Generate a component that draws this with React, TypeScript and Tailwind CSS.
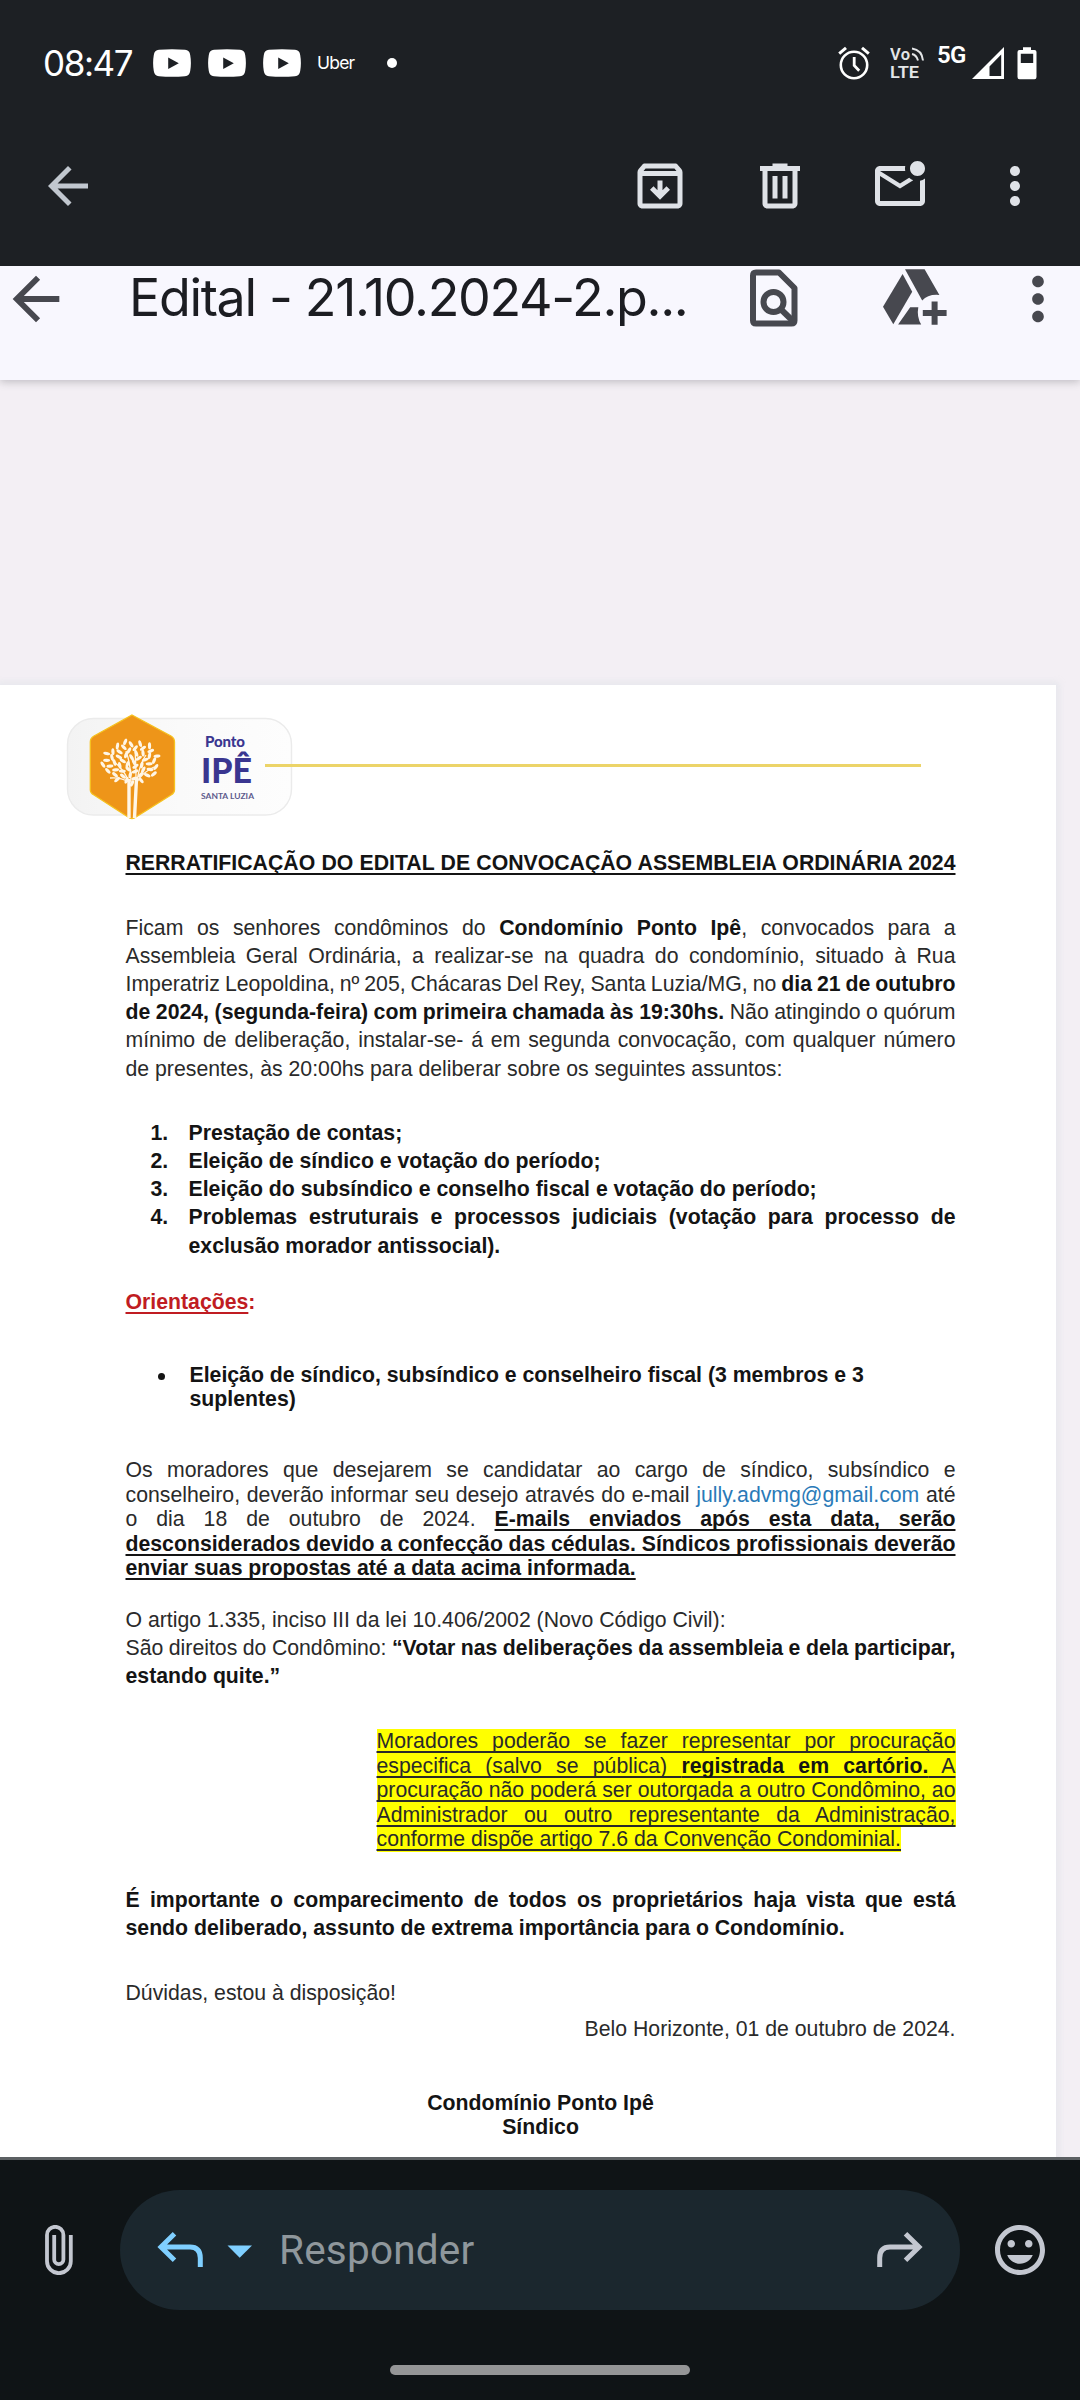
import type { ReactNode } from "react";

function YouTubeBadge() {
  return (
    <svg width="38" height="28" viewBox="0 0 38 28" className="shrink-0">
      <path
        fill="#fff"
        fillRule="evenodd"
        d="M6 .8Q19-.4 32 .8 36.600 1.200 37.200 6Q38.600 14 37.200 22 36.600 26.800 32 27.200 19 28.400 6 27.200 1.400 26.800.8 22-.6 14 .8 6 1.400 1.200 6 .8ZM15.200 8.600V20L25.800 14.300Z"
      />
    </svg>
  );
}

function Icon({ d, size = 60, className = "" }: { d: string; size?: number; className?: string }) {
  return (
    <svg width={size} height={size} viewBox="0 0 24 24" fill="currentColor" fillRule="evenodd" className={"shrink-0 " + className}>
      <path d={d} />
    </svg>
  );
}

const ARROW_BACK = "M20 11H7.830l5.590-5.590L12 4l-8 8 8 8 1.410-1.410L7.830 13H20v-2z";
const ARCHIVE =
  "M20.540 5.230l-1.390-1.680C18.880 3.210 18.470 3 18 3H6c-.47 0-.88.21-1.160.55L3.460 5.230C3.170 5.570 3 6.020 3 6.500V19c0 1.100.9 2 2 2h14c1.100 0 2-.9 2-2V6.500c0-.48-.17-.93-.46-1.270zM6.240 5h11.520l.83 1H5.420l.82-1zM5 19V8h14v11H5zM11 9.800v3.900l-1.600-1.600L8 13.500l4 4 4-4-1.400-1.400-1.600 1.600V9.800z";
const TRASH =
  "M9 3h6v1h5v2h-1v13c0 1.100-.9 2-2 2H7c-1.100 0-2-.9-2-2V6H4V4h5zM7 6v13h10V6zM9 8h2v9H9zM13 8h2v9h-2z";
const MAIL_UNREAD =
  "M22 8.980V18c0 1.100-.9 2-2 2H4c-1.100 0-2-.9-2-2V6c0-1.100.9-2 2-2h10.100c-.06.32-.1.66-.1 1s.04.68.1 1H4l8 5 3.670-2.290c.47.43 1.020.76 1.630.98L12 13 4 8v10h16V9.900c.74-.15 1.420-.48 2-.92zM16 5c0 1.660 1.340 3 3 3s3-1.340 3-3-1.340-3-3-3-3 1.340-3 3z";
const MORE =
  "M12 8c1.100 0 2-.9 2-2s-.9-2-2-2-2 .9-2 2 .9 2 2 2zm0 2c-1.100 0-2 .9-2 2s.9 2 2 2 2-.9 2-2-.9-2-2-2zm0 6c-1.100 0-2 .9-2 2s.9 2 2 2 2-.9 2-2-.9-2-2-2z";
const SMILE =
  "M12 2C6.480 2 2 6.480 2 12s4.480 10 10 10 10-4.480 10-10S17.520 2 12 2zm0 18c-4.420 0-8-3.580-8-8s3.580-8 8-8 8 3.580 8 8-3.580 8-8 8zM15.500 11c.83 0 1.500-.67 1.500-1.500S16.330 8 15.500 8 14 8.670 14 9.500s.67 1.500 1.500 1.500zM8.500 11c.83 0 1.500-.67 1.500-1.500S9.330 8 8.500 8 7 8.670 7 9.500 7.670 11 8.500 11zM12 17.500c2.330 0 4.310-1.460 5.110-3.500H6.890c.8 2.040 2.780 3.500 5.110 3.500z";

function StatusBar() {
  return (
    <div className="flex h-[126px] shrink-0 items-center pl-[43px] pr-[43px] text-white">
      <span className="w-[110px] text-[35px] tracking-[-1.4px] font-['Inter',sans-serif]">08:47</span>
      <div className="flex gap-[17px]">
        <YouTubeBadge />
        <YouTubeBadge />
        <YouTubeBadge />
      </div>
      <span className="ml-[16px] mt-[1px] w-[70px] text-[17.500px] tracking-[-0.8px] font-['Inter',sans-serif]">Uber</span>
      <span className="size-[10px] rounded-full bg-white" />
      <div className="ml-auto flex items-center">
        <svg width="32" height="34" viewBox="0 0 32 34" fill="none" stroke="#fff" className="mr-[20px]">
          <circle cx="16" cy="19" r="13.200" strokeWidth="2.600" />
          <path d="M16.200 11v8.500l5 5.200" strokeWidth="2.800" />
          <path d="M1.200 7.600L8 1.800M30.800 7.600L24 1.800" strokeWidth="3" />
        </svg>
        <svg width="34" height="46" viewBox="0 -6 34 46" fill="none" stroke="#e4e6e8" className="mr-[13px]">
          <text x="0" y="14" fill="#e4e6e8" stroke="none" fontFamily="Roboto, sans-serif" fontWeight="600" fontSize="16.500" textLength="20">Vo</text>
          <text x="0" y="32" fill="#e4e6e8" stroke="none" fontFamily="Roboto, sans-serif" fontWeight="600" fontSize="17" textLength="29" lengthAdjust="spacingAndGlyphs">LTE</text>
          <path d="M22 2.500Q32 4 33 14.500M22 8Q26.500 9 28 14.500" strokeWidth="2" />
        </svg>
        <span className="-mt-[17px] mr-[6px] w-[29px] text-[24px] font-semibold leading-[28px] tracking-[-0.6px] font-['Roboto',sans-serif]">5G</span>
        <svg width="33" height="34" viewBox="0 0 33 34" className="mr-[12px]">
          <path fill="#fff" fillRule="evenodd" d="M32 1V33H0ZM29.200 8.500V30H17.500V20.500Z" />
        </svg>
        <svg width="20" height="34" viewBox="0 0 20 34">
          <path
            fill="#fff"
            fillRule="evenodd"
            d="M6 1.200H14V4H17.500Q19.500 4 19.500 6V31Q19.500 33.200 17.500 33.200H2.500Q.5 33.200.5 31V6Q.5 4 2.500 4H6ZM3.800 7.700V17H16.200V7.700Z"
          />
        </svg>
      </div>
    </div>
  );
}

function MailToolbar() {
  return (
    <div className="flex h-[140px] shrink-0 items-center pb-[20px] pl-[38px] pr-[35px] text-[#dfe2e7]">
      <Icon d={ARROW_BACK} className="text-[#c1c7cf]" />
      <div className="ml-auto flex items-center gap-[60px]">
        <Icon d={ARCHIVE} />
        <Icon d={TRASH} />
        <Icon d={MAIL_UNREAD} />
        <Icon d={MORE} className="-ml-[5px]" />
      </div>
    </div>
  );
}

function PdfToolbar() {
  return (
    <div className="relative z-10 h-[114px] shrink-0 bg-[#f8f7fe] shadow-[0_2px_8px_rgba(60,60,70,0.28)]">
      <div className="flex h-[65px] items-center text-[#47484f]">
        <Icon d={ARROW_BACK} size={70} className="ml-[1px]" />
        <span className="-mt-[2px] ml-[58px] w-[610px] whitespace-nowrap text-[52px] leading-[60px] tracking-[-1.350px] text-[#1c1d22] font-['Inter',sans-serif]">
          Edital - 21.10.2024-2.p...
        </span>
        <svg width="70" height="70" viewBox="0 0 70 70" fill="none" stroke="currentColor" className="shrink-0">
          <path d="M17 8.500H40L55.500 24V56.500Q55.500 59.500 52.500 59.500H17Q14 59.500 14 56.500V11.500Q14 8.500 17 8.500Z" strokeWidth="6" strokeLinejoin="round" />
          <circle cx="34.500" cy="38" r="10" strokeWidth="6" />
          <path d="M41 44.500L55 58" strokeWidth="6" />
        </svg>
        <svg width="70" height="65" viewBox="0 0 70 65" fill="currentColor" className="ml-[71px] shrink-0">
          <path d="M22.600 8L32.200 25.700 13.300 58.300 3 40.700Z" />
          <path d="M25 3.300H44.600L59.400 29Q48 28 42.200 34.500Z" />
          <path d="M30.200 41.300H38.300Q36.500 51 41.200 58.500H18.100Z" />
          <path d="M51.600 35.500h6V44h9v6h-9v8.800h-6V50h-8.800v-6h8.800Z" />
        </svg>
        <Icon d={MORE} size={70} className="ml-[53px]" />
      </div>
    </div>
  );
}

// Leaves of the logo's tree, spread on a sunflower spiral round the crown.
const LEAVES = Array.from({ length: 54 }, (_, i) => {
  const a = i * 2.39996;
  const r = Math.sqrt((i + 0.5) / 54);
  const x = 71 + 29 * r * Math.cos(a);
  const y = 57 + 21.5 * r * Math.sin(a);
  const turn = (Math.atan2(y - 72, x - 71) * 180) / Math.PI + (i % 2 ? 32 : -32);
  return { x, y, turn };
});

function Logo() {
  return (
    <svg width="240" height="120" viewBox="0 0 240 120" className="shrink-0">
      <defs>
        <linearGradient id="card" x1="0" x2="1">
          <stop offset="0" stopColor="#f3f3f3" />
          <stop offset="0.5" stopColor="#fafafa" />
          <stop offset="1" stopColor="#fdfdfd" />
        </linearGradient>
      </defs>
      <rect x="7.500" y="13.500" width="224" height="96.500" rx="26" fill="url(#card)" stroke="#ebebeb" strokeWidth="1.400" />
      <path
        d="M72 10L111 31Q114.500 33 114.500 37V85Q114.500 88 111 90L76 112Q72 115 68 112L34 90Q30.300 88 30.300 85V37Q30.300 33 34 31Z"
        fill="#ee9519"
        stroke="#f6c21e"
        strokeWidth="1.300"
      />
      <g stroke="#fff6e6" fill="none" strokeWidth="1.300">
        <path d="M69 77Q64 64 53 56M69 77Q60 72 50 73M77 77Q79 60 86 50M77 77Q83 67 94 62M71 77Q71 60 66 46M76 77Q76 60 75 44" />
        <path d="M69 74V113M76.500 74L74.500 113" strokeWidth="3.400" />
      </g>
      <g fill="#fff6e6">
        {LEAVES.map((l, i) => (
          <ellipse key={i} cx={l.x} cy={l.y} rx="3.500" ry="1.600" transform={`rotate(${l.turn} ${l.x} ${l.y})`} />
        ))}
      </g>
      <g fill="#3a3690" fontFamily="Lato, sans-serif">
        <text x="145" y="41.500" fontSize="15" fontWeight="900" textLength="40">Ponto</text>
        <text x="141" y="77.500" fontSize="34" fontWeight="900" textLength="51" lengthAdjust="spacingAndGlyphs">IPÊ</text>
        <text x="141" y="94" fontSize="8" fontWeight="700" fill="#5d5a8c" textLength="53" lengthAdjust="spacingAndGlyphs">SANTA LUZIA</text>
      </g>
    </svg>
  );
}

/** One justified line of the notice. */
function J({ children }: { children: ReactNode }) {
  return <div className="whitespace-nowrap text-justify [text-align-last:justify] [word-spacing:-2px]">{children}</div>;
}

function U({ children }: { children: ReactNode }) {
  return (
    <span className="underline decoration-2 underline-offset-[2.500px] [text-decoration-skip-ink:none]">{children}</span>
  );
}

function B({ children }: { children: ReactNode }) {
  return <b className="font-bold text-[#141414]">{children}</b>;
}

function Item({ n, children }: { n: string; children: ReactNode }) {
  return (
    <div className="flex">
      <span className="w-[38px] shrink-0">{n}</span>
      <div className="flex-1">{children}</div>
    </div>
  );
}

function Notice() {
  return (
    <div className="h-[1500px] w-[1056px] bg-white pt-[20px] text-[21.250px] leading-[28.100px] text-[#2a2a2a] shadow-[0_0_6px_3px_rgba(225,228,234,0.7)] font-['Liberation_Sans',Arial,sans-serif]">
      <div className="flex items-center pl-[60px]">
        <Logo />
        <div className="-ml-[35px] h-[3px] w-[656px] bg-[#ecd468]" />
      </div>
      <div className="ml-[125.500px] w-[830px]">
        <h1 className="mt-[24px] font-bold text-[#141414]">
          <J><U>RERRATIFICAÇÃO DO EDITAL DE CONVOCAÇÃO ASSEMBLEIA ORDINÁRIA 2024</U></J>
        </h1>

        <div className="mt-[37px]">
          <J>Ficam os senhores condôminos do <B>Condomínio Ponto Ipê</B>, convocados para a</J>
          <J>Assembleia Geral Ordinária, a realizar-se na quadra do condomínio, situado à Rua</J>
          <J>Imperatriz Leopoldina, nº 205, Chácaras Del Rey, Santa Luzia/MG, no <B>dia 21 de outubro</B></J>
          <J><B>de 2024, (segunda-feira) com primeira chamada às 19:30hs.</B> Não atingindo o quórum</J>
          <J>mínimo de deliberação, instalar-se- á em segunda convocação, com qualquer número</J>
          <div>de presentes, às 20:00hs para deliberar sobre os seguintes assuntos:</div>
        </div>

        <div className="mt-[36.500px] pl-[25px] font-bold text-[#141414]">
          <Item n="1.">Prestação de contas;</Item>
          <Item n="2.">Eleição de síndico e votação do período;</Item>
          <Item n="3.">Eleição do subsíndico e conselho fiscal e votação do período;</Item>
          <Item n="4.">
            <J>Problemas estruturais e processos judiciais (votação para processo de</J>
            <div>exclusão morador antissocial).</div>
          </Item>
        </div>

        <div className="mt-[28px] font-bold text-[#c01c22]"><U>Orientações</U>:</div>

        <div className="mt-[47px] flex pl-[32px] font-bold leading-[24.500px] text-[#141414]">
          <span className="mt-[10px] mr-[25px] size-[7px] shrink-0 rounded-full bg-[#141414]" />
          <div>
            <div>Eleição de síndico, subsíndico e conselheiro fiscal (3 membros e 3</div>
            <div>suplentes)</div>
          </div>
        </div>

        <div className="mt-[46.300px] leading-[24.550px]">
          <J>Os moradores que desejarem se candidatar ao cargo de síndico, subsíndico e</J>
          <J>conselheiro, deverão informar seu desejo através do e-mail <span className="text-[#2a7ab8]">jully.advmg@gmail.com</span> até</J>
          <J>o dia 18 de outubro de 2024. <B><U>E-mails enviados após esta data, serão</U></B></J>
          <J><B><U>desconsiderados devido a confecção das cédulas. Síndicos profissionais deverão</U></B></J>
          <div><B><U>enviar suas propostas até a data acima informada.</U></B></div>
        </div>

        <div className="mt-[25.500px]">
          <div>O artigo 1.335, inciso III da lei 10.406/2002 (Novo Código Civil):</div>
          <J>São direitos do Condômino: <B>“Votar nas deliberações da assembleia e dela participar,</B></J>
          <div><B>estando quite.”</B></div>
        </div>

        <div className="mt-[38.500px] ml-[251px] leading-[24.500px]">
          <div className="bg-[#ffff00]">
            <J><U>Moradores poderão se fazer representar por procuração</U></J>
            <J><U>especifica (salvo se pública) <B>registrada em cartório.</B> A</U></J>
            <J><U>procuração não poderá ser outorgada a outro Condômino, ao</U></J>
            <J><U>Administrador ou outro representante da Administração,</U></J>
          </div>
          <div className="w-fit bg-[#ffff00]"><U>conforme dispõe artigo 7.6 da Convenção Condominial.</U></div>
        </div>

        <div className="mt-[34px] leading-[28.500px]">
          <J><B>É importante o comparecimento de todos os proprietários haja vista que está</B></J>
          <div><B>sendo deliberado, assunto de extrema importância para o Condomínio.</B></div>
        </div>

        <div className="mt-[36.700px]">Dúvidas, estou à disposição!</div>
        <div className="mt-[8px] text-right">Belo Horizonte, 01 de outubro de 2024.</div>

        <div className="mt-[47.300px] text-center font-bold leading-[24.500px] text-[#141414]">
          <div>Condomínio Ponto Ipê</div>
          <div>Síndico</div>
        </div>
      </div>
    </div>
  );
}

function ReplyBar() {
  return (
    <div className="flex h-[240px] shrink-0 flex-col items-center bg-[#0f1416]">
      <div className="mt-[30px] flex h-[120px] w-full items-center">
        <svg width="28" height="50" viewBox="0 0 28 50" fill="none" stroke="#c3c7d0" strokeWidth="3.800" className="ml-[45px] mr-[47px] shrink-0">
          <path d="M25.800 10V36.300A11.900 11.900 0 0 1 2 36.300V10A8.200 8.200 0 0 1 18.400 10V34.500A4.600 4.600 0 0 1 9.200 34.500V10" />
        </svg>
        <div className="flex h-[120px] w-[840px] shrink-0 items-center rounded-full bg-[#1b272e] pl-[37px] pr-[37px]">
          <svg width="47" height="36" viewBox="0 0 47 36" fill="none" stroke="#7fcfff" strokeWidth="5">
            <path d="M17.500 1.800L4 15 17.500 28.200M4 15H33Q43.300 15 43.300 26V35" />
          </svg>
          <svg width="26" height="13" viewBox="0 0 26 13" className="ml-[23px] mt-[2px]"><path d="M.5.500H25L12.700 12.700Z" fill="#7fcfff" /></svg>
          <span className="ml-[26px] text-[40.500px] tracking-[0.200px] text-[#8f979c] font-['Roboto',sans-serif]">Responder</span>
          <svg width="47" height="36" viewBox="0 0 47 36" fill="none" stroke="#c3c7d0" strokeWidth="5" className="ml-auto">
            <path d="M29.500 1.800L43 15 29.500 28.200M43 15H14Q3.700 15 3.700 26V35" />
          </svg>
        </div>
        <Icon d={SMILE} className="ml-[30px] text-[#c3c7d0]" />
      </div>
      <div className="mt-[55px] h-[10px] w-[300px] rounded-full bg-[#949596]" />
    </div>
  );
}

export default function App() {
  return (
    <div className="flex h-[2400px] w-[1080px] flex-col overflow-hidden bg-[#1d2024]">
      <StatusBar />
      <MailToolbar />
      <div className="flex h-[1891px] shrink-0 flex-col overflow-hidden bg-[#f3eff4]">
        <PdfToolbar />
        <div className="pt-[305px]">
          <Notice />
        </div>
      </div>
      <div className="h-[3px] shrink-0 bg-[#5c6063]" />
      <ReplyBar />
    </div>
  );
}
